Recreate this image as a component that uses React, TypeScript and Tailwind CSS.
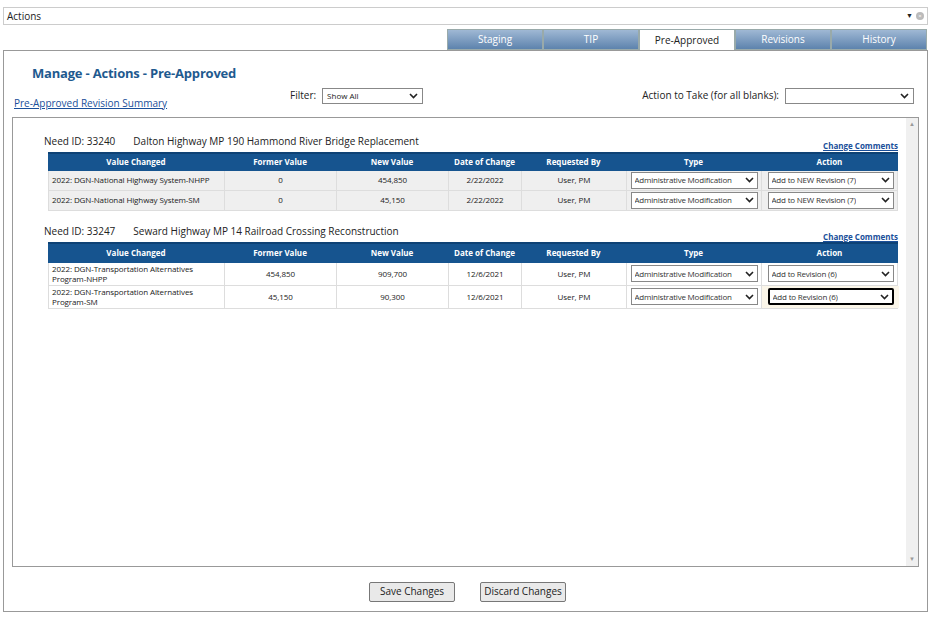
import React from "react";

const Chev = () => (
  <svg width="9" height="6" viewBox="0 0 9 6" className="shrink-0"><path d="M1 1l3.5 3.5L8 1" stroke="#222" strokeWidth="1.6" fill="none" /></svg>
);

const Sel = ({ text, w, focus }: { text: string; w: string; focus?: boolean }) => (
  <div className={`flex items-center justify-between h-[17px] bg-white px-[3px] text-[8px] tracking-[-0.2px] text-[#333] ${w} ${focus ? "border-2 border-black rounded-[2px]" : "border border-[#888]"}`}>
    <span className="whitespace-nowrap overflow-hidden">{text}</span>
    <Chev />
  </div>
);

type Row = { v: string; f: string; n: string; d: string; a: string; focus?: boolean };

const cols = "grid grid-cols-[176px_112px_112px_73px_105px_135px_137px]";

const Table = ({ rows, tall }: { rows: Row[]; tall?: boolean }) => (
  <div className="ml-[35px] w-[850px]">
    <div className={`${cols} bg-[#16548f] text-white text-[8px] font-bold ${tall ? "h-[21px]" : "h-[19px]"} items-center text-center border-t-[2px] border-[#0e4275]`}>
      <div>Value Changed</div><div>Former Value</div><div>New Value</div><div>Date of Change</div><div>Requested By</div><div>Type</div><div>Action</div>
    </div>
    {rows.map((r, i) => (
      <div key={i} className={`${cols} ${tall ? "h-[23px] bg-white" : "h-[20px] bg-[#efefef]"} text-[8px] tracking-[-0.1px] text-[#222] border-b border-[#ddd] border-l border-r`}>
        <div className="flex items-center px-[3px] border-r border-[#ddd] leading-[10px]">{r.v}</div>
        <div className="flex items-center justify-center border-r border-[#ddd]">{r.f}</div>
        <div className="flex items-center justify-center border-r border-[#ddd]">{r.n}</div>
        <div className="flex items-center justify-center border-r border-[#ddd]">{r.d}</div>
        <div className="flex items-center justify-center border-r border-[#ddd]">User, PM</div>
        <div className="flex items-center justify-center border-r border-[#ddd]"><Sel text="Administrative Modification" w="w-[127px]" /></div>
        <div className={`flex items-center justify-center ${r.focus ? "bg-[#fbf6e9]" : ""}`}><Sel text={r.a} w="w-[126px]" focus={r.focus} /></div>
      </div>
    ))}
  </div>
);

export default function App() {
  const font = { fontFamily: '"Open Sans", "Noto Sans", sans-serif' };
  return (
    <div style={font} className="w-[931px] h-[617px] bg-white relative text-[#222]">
      <div className="pt-[7px] px-[3px]">
        <div className="h-[18px] border border-[#ccc] flex items-center justify-between pl-[3px] pr-[3px] text-[10px]">
          <span>Actions</span>
          <span className="flex items-center gap-[3px]"><span className="text-[7px]">▼</span><span className="w-[8px] h-[8px] rounded-full bg-[#bbb] text-white text-[6px] leading-[8px] text-center">×</span></span>
        </div>
        <div className="flex justify-end pr-[1px] mt-[4px] h-[21px]">
          {["Staging", "TIP", "Pre-Approved", "Revisions", "History"].map((t) => (
            <div key={t} className={`w-[96px] flex items-center justify-center text-[10px] border border-[#9aa] ${t === "Pre-Approved" ? "bg-white text-[#222] border-b-0" : "bg-gradient-to-b from-[#9fb8d4] to-[#5d83ad] text-white"}`}>{t}</div>
          ))}
        </div>
        <div className="border border-[#999] h-[562px] relative">
          <div className="pl-[28px] pt-[13px] text-[13px] font-bold text-[#1f5a8f] tracking-[-0.2px]">Manage - Actions - Pre-Approved</div>
          <div className="flex items-end h-[28px] pl-[10px] pr-[13px] text-[10px]">
            <a className="text-[#1a4f9a] underline w-[276px] pb-[1px]">Pre-Approved Revision Summary</a>
            <div className="flex items-center gap-[6px] self-start mt-[4px]">
              <span>Filter:</span>
              <div className="flex items-center justify-between w-[101px] h-[16px] border border-[#888] px-[4px] text-[8px]"><span>Show All</span><Chev /></div>
            </div>
            <div className="flex-1" />
            <div className="flex items-center gap-[6px] self-start mt-[4px]">
              <span>Action to Take (for all blanks):</span>
              <div className="flex items-center justify-end w-[129px] h-[16px] border border-[#888] px-[4px]"><Chev /></div>
            </div>
          </div>
          <div className="mx-[8px] mt-[5px] h-[450px] border border-[#999] flex">
            <div className="flex-1 pt-[17px]">
              <div className="flex items-end justify-between w-[850px] ml-[31px] h-[14px]">
                <div className="text-[10px]"><span className="mr-[18px]">Need ID: 33240</span>Dalton Highway MP 190 Hammond River Bridge Replacement</div>
                <a className="text-[8px] font-bold text-[#1a4f9a] underline mr-[-4px] mb-[-3px]">Change Comments</a>
              </div>
              <div className="mt-[3px]">
                <Table rows={[
                  { v: "2022: DGN-National Highway System-NHPP", f: "0", n: "454,850", d: "2/22/2022", a: "Add to NEW Revision (7)" },
                  { v: "2022: DGN-National Highway System-SM", f: "0", n: "45,150", d: "2/22/2022", a: "Add to NEW Revision (7)" },
                ]} />
              </div>
              <div className="flex items-end justify-between w-[850px] ml-[31px] h-[14px] mt-[14px]">
                <div className="text-[10px]"><span className="mr-[18px]">Need ID: 33247</span>Seward Highway MP 14 Railroad Crossing Reconstruction</div>
                <a className="text-[8px] font-bold text-[#1a4f9a] underline mr-[-4px] mb-[-4px]">Change Comments</a>
              </div>
              <div className="mt-[3px]">
                <Table tall rows={[
                  { v: "2022: DGN-Transportation Alternatives Program-NHPP", f: "454,850", n: "909,700", d: "12/6/2021", a: "Add to Revision (6)" },
                  { v: "2022: DGN-Transportation Alternatives Program-SM", f: "45,150", n: "90,300", d: "12/6/2021", a: "Add to Revision (6)", focus: true },
                ]} />
              </div>
            </div>
            <div className="w-[12px] bg-[#f0f0f0] flex flex-col justify-between items-center text-[6px] text-[#999] py-[2px]">
              <span>▲</span><span>▼</span>
            </div>
          </div>
          <div className="flex justify-center gap-[25px] mt-[15px] pl-[4px]">
            <div className="w-[86px] h-[20px] border border-[#777] bg-[#e9e9e9] rounded-[2px] text-[10px] flex items-center justify-center">Save Changes</div>
            <div className="w-[86px] h-[20px] border border-[#777] bg-[#e9e9e9] rounded-[2px] text-[10px] flex items-center justify-center">Discard Changes</div>
          </div>
        </div>
      </div>
    </div>
  );
}
